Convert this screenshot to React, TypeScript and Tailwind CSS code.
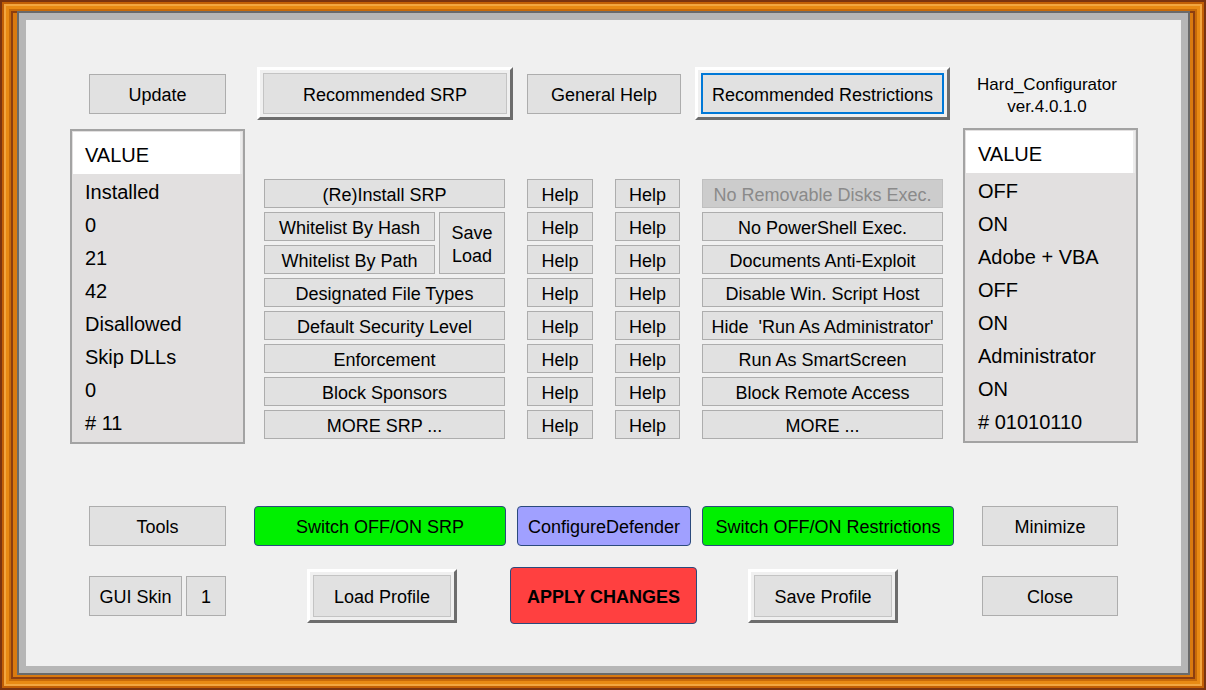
import React from "react";

const face = "flex items-center justify-center border border-[#adadad] bg-[#e1e1e1] pt-[3px] text-black";

function Btn({ className = "", children }: { className?: string; children: React.ReactNode }) {
  return <div className={`${face} text-[18px] ${className}`}>{children}</div>;
}

// classic 3D raised push button with an inner face
function Raised({ className = "", inner = "border-[#adadad]", children }: { className?: string; inner?: string; children: React.ReactNode }) {
  return (
    <div className={`flex border-[3px] border-t-white border-l-white border-b-[#6d6d6d] border-r-[#6d6d6d] bg-[#f0f0f0] p-[3px] ${className}`}>
      <div className={`flex flex-1 items-center justify-center border-2 bg-[#e1e1e1] pt-[3px] text-[18px] text-black ${inner}`}>{children}</div>
    </div>
  );
}

function Colored({ className = "", children }: { className?: string; children: React.ReactNode }) {
  return (
    <div className={`flex h-[40px] items-center justify-center rounded-[4px] border-[1.5px] border-[#2b4a7c] pt-[3px] text-[18px] text-black ${className}`}>
      {children}
    </div>
  );
}

function ValueList({ items }: { items: string[] }) {
  return (
    <div className="flex h-[315px] w-[175px] flex-col border-2 border-[#a3a3a3] bg-[#e2e0e0] p-[1px] text-[20px] text-black">
      <div className="flex h-[42px] shrink-0 items-center border-r-2 border-[#ececec] bg-white pl-[12px] pt-[3px]">VALUE</div>
      {items.map((v, i) => (
        <div key={i} className="flex h-[33px] shrink-0 items-center pl-[12px] pt-[3px]">
          {v}
        </div>
      ))}
    </div>
  );
}

const srpRows = ["Designated File Types", "Default Security Level", "Enforcement", "Block Sponsors", "MORE SRP ..."];

const restrictions = [
  "No PowerShell Exec.",
  "Documents Anti-Exploit",
  "Disable Win. Script Host",
  "Hide  'Run As Administrator'",
  "Run As SmartScreen",
  "Block Remote Access",
  "MORE ...",
];

export default function App() {
  return (
    <div className="h-[690px] w-[1206px] overflow-hidden bg-[#0b2a4a] font-['Liberation_Sans',Arial,sans-serif]">
      <div className="h-full w-full bg-[#d97a10] pt-[11px] pr-[16px] pb-[15px] pl-[17px] shadow-[inset_0_0_0_2px_#7a3410,inset_0_0_0_4px_#c25f06,inset_0_0_0_6px_#f2a640,inset_0_0_0_9px_#e88a14,inset_0_0_0_11px_#c86a08,inset_0_0_0_13px_#8c3e10]">
        <div className="h-full w-full border-2 border-[#6a6a6a] bg-[#b6b6b6] p-[7px]">
          <div className="flex h-full w-full flex-col bg-[#f0f0f0]">
            {/* top row */}
            <div className="ml-[63px] mt-[47px] flex h-[53px] items-center">
              <Btn className="h-[40px] w-[137px]">Update</Btn>
              <Raised className="ml-[31px] h-[53px] w-[256px]" inner="border-[#c4c4c4] border-[1px]">
                Recommended SRP
              </Raised>
              <Btn className="ml-[14px] h-[40px] w-[154px]">General Help</Btn>
              <Raised className="ml-[14px] h-[53px] w-[255px]" inner="border-[#0078d7]">
                Recommended Restrictions
              </Raised>
              <div className="ml-[19px] flex w-[156px] flex-col items-center pt-[4px] text-[17px] leading-[22px] text-black">
                <span>Hard_Configurator</span>
                <span>ver.4.0.1.0</span>
              </div>
            </div>

            {/* value lists and option buttons */}
            <div className="ml-[44px] mt-[9px] flex">
              <ValueList items={["Installed", "0", "21", "42", "Disallowed", "Skip DLLs", "0", "# 11"]} />

              <div className="ml-[19px] mt-[50px] flex gap-[22px]">
                <div className="flex w-[241px] flex-col gap-[4px]">
                  <Btn className="h-[29px]">(Re)Install SRP</Btn>
                  <div className="flex gap-[4px]">
                    <div className="flex w-[171px] flex-col gap-[4px]">
                      <Btn className="h-[29px]">Whitelist By Hash</Btn>
                      <Btn className="h-[29px]">Whitelist By Path</Btn>
                    </div>
                    <Btn className="h-[62px] flex-1 flex-col leading-[23px]">
                      <span>Save</span>
                      <span>Load</span>
                    </Btn>
                  </div>
                  {srpRows.map((t) => (
                    <Btn key={t} className="h-[29px]">
                      {t}
                    </Btn>
                  ))}
                </div>

                {[66, 65].map((w) => (
                  <div key={w} className={`flex flex-col gap-[4px] ${w === 66 ? "w-[66px]" : "w-[65px]"}`}>
                    {Array.from({ length: 8 }).map((_, i) => (
                      <Btn key={i} className="h-[29px]">
                        Help
                      </Btn>
                    ))}
                  </div>
                ))}

                <div className="flex w-[241px] flex-col gap-[4px]">
                  <div className="flex h-[29px] items-center justify-center border border-[#bfbfbf] bg-[#cccccc] pt-[3px] text-[18px] text-[#8a8a8a]">
                    No Removable Disks Exec.
                  </div>
                  {restrictions.map((t) => (
                    <Btn key={t} className="h-[29px] whitespace-pre">
                      {t}
                    </Btn>
                  ))}
                </div>
              </div>

              <div className="ml-[20px] -mt-[1px]">
                <ValueList items={["OFF", "ON", "Adobe + VBA", "OFF", "ON", "Administrator", "ON", "# 01010110"]} />
              </div>
            </div>

            {/* switches */}
            <div className="ml-[63px] mt-[62px] flex h-[40px] items-center">
              <Btn className="h-[40px] w-[137px]">Tools</Btn>
              <Colored className="ml-[28px] w-[252px] bg-[#00f000]">Switch OFF/ON SRP</Colored>
              <Colored className="ml-[11px] w-[174px] bg-[#a0a0ff]">ConfigureDefender</Colored>
              <Colored className="ml-[11px] w-[252px] bg-[#00f000]">Switch OFF/ON Restrictions</Colored>
              <Btn className="ml-[28px] h-[40px] w-[136px]">Minimize</Btn>
            </div>

            {/* profile and apply */}
            <div className="ml-[63px] mt-[21px] flex h-[57px] items-center">
              <Btn className="h-[40px] w-[93px]">GUI Skin</Btn>
              <Btn className="ml-[4px] h-[40px] w-[40px]">1</Btn>
              <Raised className="ml-[81px] h-[54px] w-[150px]" inner="border-[#c4c4c4] border-[1px]">
                Load Profile
              </Raised>
              <Colored className="ml-[53px] !h-[57px] w-[187px] bg-[#ff4040] font-bold">APPLY CHANGES</Colored>
              <Raised className="ml-[51px] h-[54px] w-[150px]" inner="border-[#c4c4c4] border-[1px]">
                Save Profile
              </Raised>
              <Btn className="ml-[84px] h-[40px] w-[136px]">Close</Btn>
            </div>
          </div>
        </div>
      </div>
    </div>
  );
}
